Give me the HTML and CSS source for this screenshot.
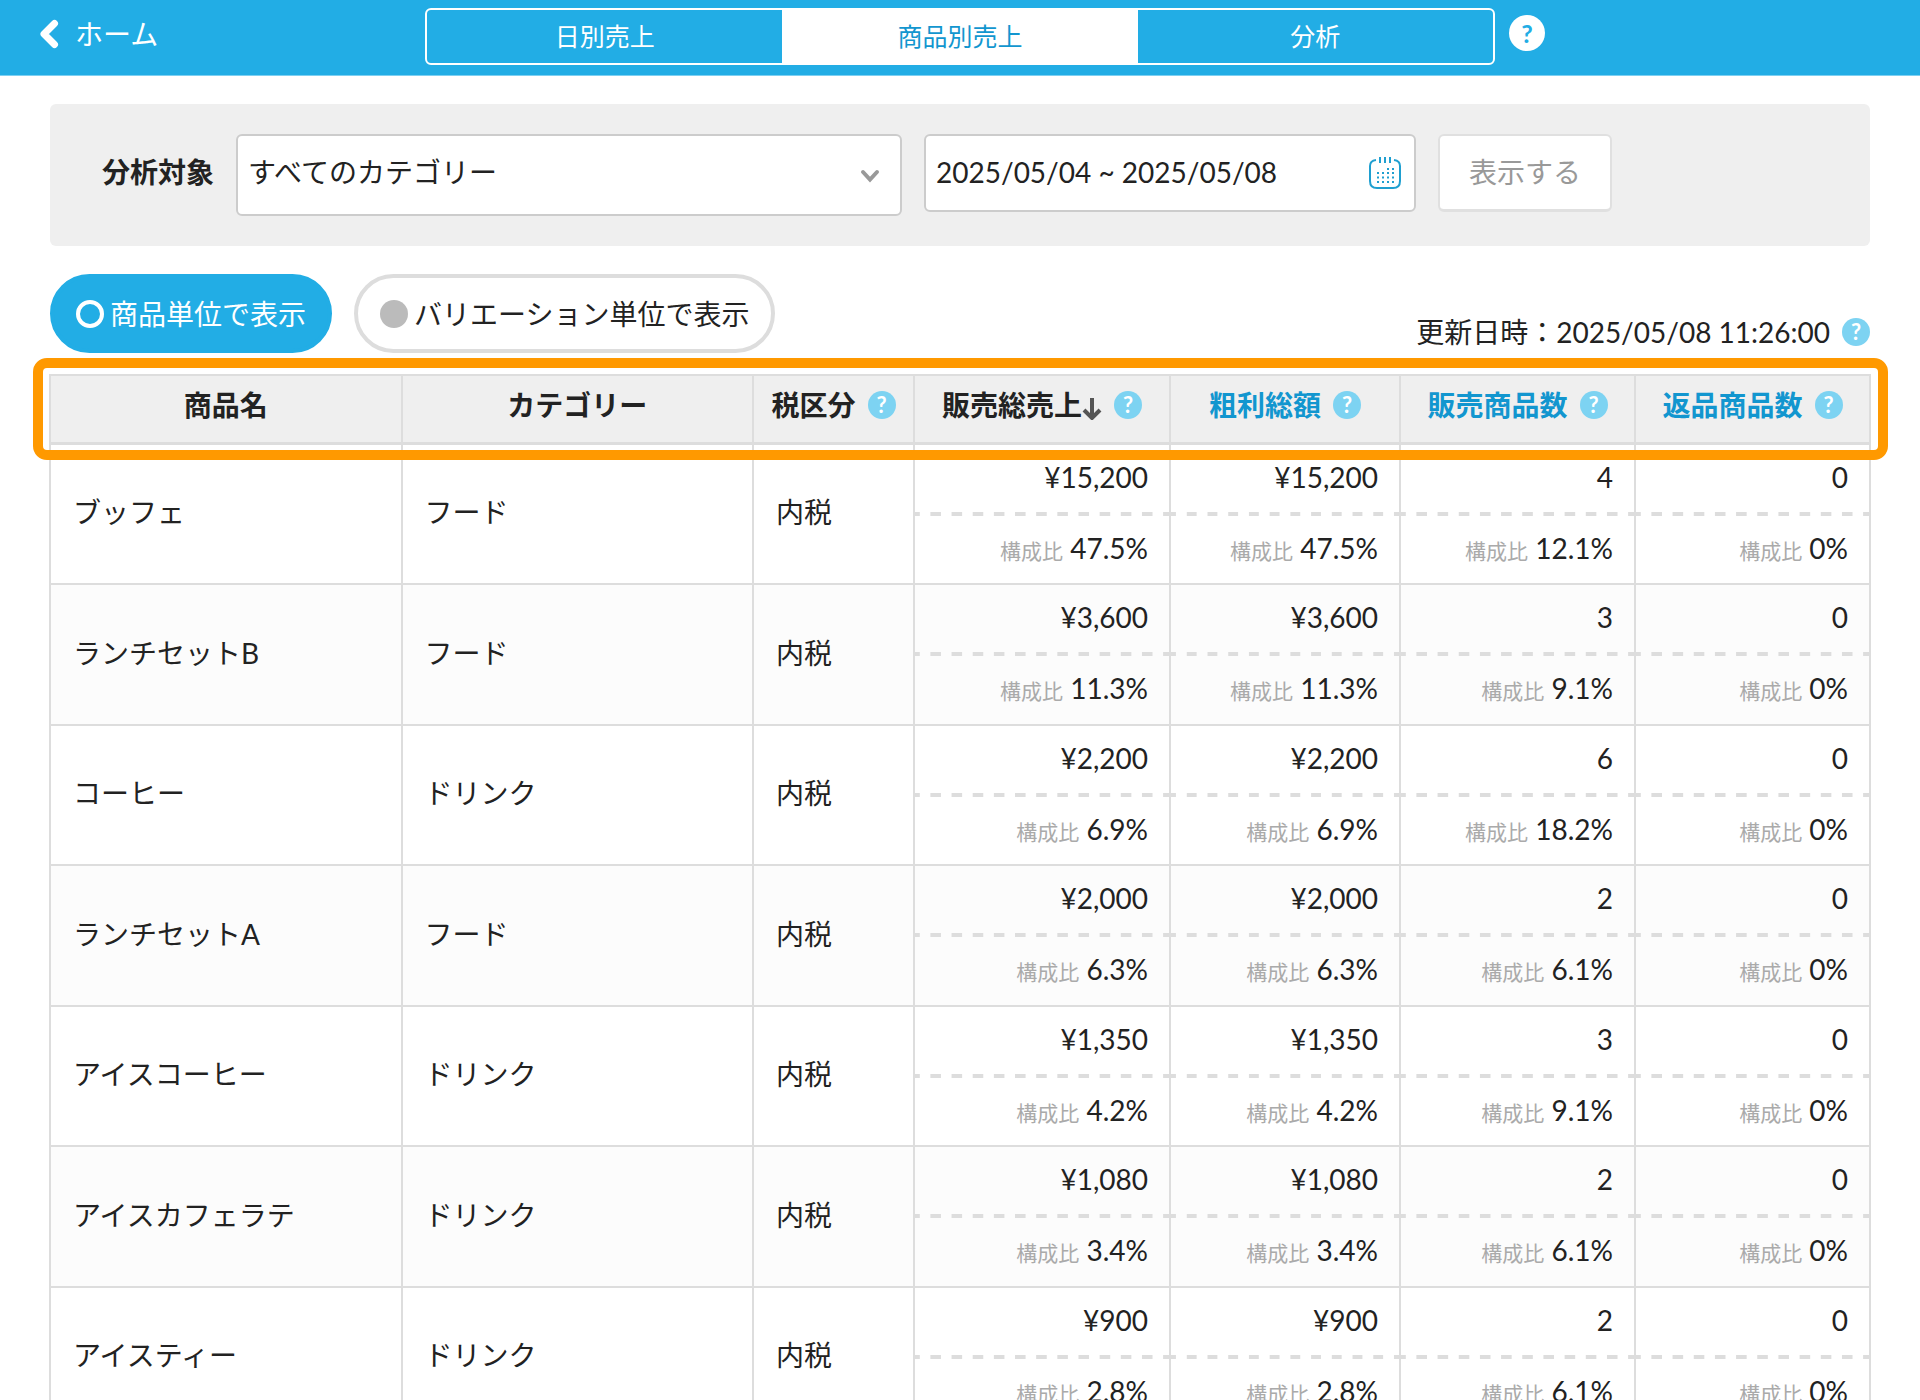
FILE: index.html
```
<!DOCTYPE html>
<html lang="ja">
<head>
    <meta charset="UTF-8">
    <meta name="viewport" content="width=device-width, initial-scale=1.0">
    <title>商品別売上</title>
    <link rel="stylesheet" href="styles.css">
</head>
<body>
    <header class="header">
        <a class="home-link" href="#">
            <svg class="home-icon" viewBox="0 0 20 30"><path d="M15.500 4.500 L5 15 L15.500 25.500" fill="none" stroke="#fff" stroke-width="7" stroke-linecap="round" stroke-linejoin="round"/></svg>
            ホーム
        </a>
        <nav class="tabs">
            <a href="#">日別売上</a>
            <a href="#" class="active">商品別売上</a>
            <a href="#">分析</a>
        </nav>
        <button class="help help-large" type="button" aria-label="ヘルプ">?</button>
    </header>

    <main class="content">
        <form class="filter">
            <label class="filter-label" for="category">分析対象</label>
            <div class="select-box">
                <select id="category">
                    <option>すべてのカテゴリー</option>
                    <option>フード</option>
                    <option>ドリンク</option>
                </select>
                <svg class="select-arrow" viewBox="0 0 20 14"><path d="M3 3 L10 10.500 L17 3" fill="none" stroke="#999" stroke-width="4" stroke-linecap="round"/></svg>
            </div>
            <div class="date-box">
                <input type="text" id="period" aria-label="期間" value="2025/05/04 ~ 2025/05/08">
                <svg class="calendar-icon" viewBox="0 0 32 32" fill="none" stroke="#1f9fd0" stroke-width="2">
                    <path d="M7 3 C3 3.500 1 5.500 1 9 V24 C1 29 3 31 8 31 H24 C29 31 31 29 31 24 V9 C31 5.500 29 3.500 25 3"/>
                    <path d="M11 0 V6 M16 0 V6 M21 0 V6"/>
                    <path d="M18 12 H25" stroke-dasharray="2 3"/>
                    <path d="M8 16 H25 M8 20.500 H25 M8 25 H25" stroke-dasharray="2 3"/>
                </svg>
            </div>
            <button class="show-button" type="button">表示する</button>
        </form>

        <div class="toolbar">
            <div class="unit-switch">
                <label class="unit"><input type="radio" name="unit" checked>商品単位で表示</label>
                <label class="unit"><input type="radio" name="unit">バリエーション単位で表示</label>
            </div>
            <div class="updated">
                <span>更新日時：2025/05/08 11:26:00</span>
                <button class="help" type="button" aria-label="ヘルプ">?</button>
            </div>
        </div>

        <div class="table-wrap">
            <table class="sales-table">
                <colgroup>
                    <col>
                    <col>
                    <col class="col-tax">
                    <col class="col-sales">
                    <col class="col-profit">
                    <col class="col-count">
                    <col class="col-count">
                </colgroup>
                <thead>
                    <tr>
                        <th><div class="head">商品名</div></th>
                        <th><div class="head">カテゴリー</div></th>
                        <th><div class="head">税区分<button class="help" type="button" aria-label="ヘルプ">?</button></div></th>
                        <th>
                            <div class="head">
                                <button class="sort current" type="button">販売総売上<svg class="sort-arrow" viewBox="0 0 20 22"><path d="M10 0 V20 M2 12 L10 20 L18 12" fill="none" stroke="#555" stroke-width="4"/></svg></button>
                                <button class="help" type="button" aria-label="ヘルプ">?</button>
                            </div>
                        </th>
                        <th><div class="head"><button class="sort" type="button">粗利総額</button><button class="help" type="button" aria-label="ヘルプ">?</button></div></th>
                        <th><div class="head"><button class="sort" type="button">販売商品数</button><button class="help" type="button" aria-label="ヘルプ">?</button></div></th>
                        <th><div class="head"><button class="sort" type="button">返品商品数</button><button class="help" type="button" aria-label="ヘルプ">?</button></div></th>
                    </tr>
                </thead>
                <tbody id="sales-body">
                    <!-- Rows are inserted here -->
                </tbody>
            </table>
            <div class="highlight"></div>
        </div>
    </main>

    <script>
        const items = [
            { name: "ブッフェ", category: "フード", sales: "¥15,200", rate: "47.5%", count: 4, countRate: "12.1%" },
            { name: "ランチセットB", category: "フード", sales: "¥3,600", rate: "11.3%", count: 3, countRate: "9.1%" },
            { name: "コーヒー", category: "ドリンク", sales: "¥2,200", rate: "6.9%", count: 6, countRate: "18.2%" },
            { name: "ランチセットA", category: "フード", sales: "¥2,000", rate: "6.3%", count: 2, countRate: "6.1%" },
            { name: "アイスコーヒー", category: "ドリンク", sales: "¥1,350", rate: "4.2%", count: 3, countRate: "9.1%" },
            { name: "アイスカフェラテ", category: "ドリンク", sales: "¥1,080", rate: "3.4%", count: 2, countRate: "6.1%" },
            { name: "アイスティー", category: "ドリンク", sales: "¥900", rate: "2.8%", count: 2, countRate: "6.1%" }
        ];

        function valueCell(value, rate) {
            return `
                <td class="value">
                    <div class="amount">${value}</div>
                    <div class="ratio"><span class="ratio-label">構成比</span> ${rate}</div>
                </td>
            `;
        }

        document.getElementById('sales-body').innerHTML = items.map(item => `
            <tr>
                <td class="text">${item.name}</td>
                <td class="text">${item.category}</td>
                <td class="text">内税</td>
                ${valueCell(item.sales, item.rate)}
                ${valueCell(item.sales, item.rate)}
                ${valueCell(item.count, item.countRate)}
                ${valueCell(0, "0%")}
            </tr>
        `).join('');
    </script>
</body>
</html>
```

FILE: styles.css
```
* {
    box-sizing: border-box;
}

body {
    margin: 0;
    height: 100vh;
    display: flex;
    flex-direction: column;
    font-family: Lato, "Noto Sans CJK JP", sans-serif;
    font-size: 28px;
    line-height: 40px;
    color: #222;
    background-color: #fff;
}

button,
input,
select {
    font: inherit;
    color: inherit;
    margin: 0;
}

button {
    padding: 0;
    border: none;
    background: none;
    cursor: pointer;
}

svg {
    display: block;
    flex: none;
}

/* Header */
.header {
    flex: none;
    display: grid;
    grid-template-columns: 1fr minmax(0, 1070px) 1fr;
    column-gap: 14px;
    align-items: start;
    padding: 8px 0 10px;
    background-color: #22ade5;
    border-bottom: 1px solid #7dd0f2;
}

.home-link {
    display: flex;
    align-items: center;
    gap: 16px;
    height: 52px;
    padding-left: 39px;
    color: #fff;
    text-decoration: none;
}

.home-icon {
    width: 20px;
    height: 30px;
}

.tabs {
    display: flex;
    height: 57px;
    border: 2px solid #fff;
    border-radius: 6px;
}

.tabs a {
    flex: 1;
    display: flex;
    align-items: center;
    justify-content: center;
    padding-bottom: 2px;
    font-size: 25px;
    color: #fff;
    text-decoration: none;
}

.tabs a.active {
    color: #1296cf;
    background-color: #fff;
}

.help {
    flex: none;
    width: 28px;
    height: 28px;
    border-radius: 50%;
    font-size: 22px;
    line-height: 28px;
    font-weight: bold;
    text-align: center;
    color: #fff;
    background-color: #7dd3f2;
}

.help-large {
    width: 36px;
    height: 36px;
    margin-top: 7px;
    font-size: 25px;
    line-height: 36px;
    color: #22ade5;
    background-color: #fff;
}

.content {
    flex: 1;
    min-height: 0;
    overflow-y: auto;
    scrollbar-width: none;
    padding: 28px 50px 0;
}

/* Filter */
.filter {
    display: flex;
    align-items: flex-start;
    gap: 22px;
    padding: 30px 52px;
    border-radius: 6px;
    background-color: #efefef;
}

.filter-label {
    font-weight: bold;
    line-height: 76px;
}

.select-box {
    position: relative;
    width: 666px;
}

.select-box select {
    width: 100%;
    height: 82px;
    padding: 0 60px 6px 10px;
    border: 2px solid #ccc;
    border-radius: 6px;
    background-color: #fff;
    appearance: none;
}

.select-arrow {
    position: absolute;
    right: 22px;
    top: 35px;
    width: 20px;
    height: 14px;
    pointer-events: none;
}

.date-box {
    position: relative;
    width: 492px;
}

.date-box input {
    width: 100%;
    height: 78px;
    padding: 0 60px 2px 10px;
    border: 2px solid #ccc;
    border-radius: 6px;
    background-color: #fff;
}

.calendar-icon {
    position: absolute;
    right: 15px;
    top: 23px;
    width: 32px;
    height: 32px;
    pointer-events: none;
}

.show-button {
    width: 174px;
    height: 78px;
    padding-bottom: 2px;
    border: 2px solid #e0e0e0;
    border-bottom-width: 3px;
    border-radius: 6px;
    color: #999;
    background-color: #fff;
}

/* Unit switch and update time */
.toolbar {
    display: flex;
    justify-content: space-between;
    align-items: flex-end;
    padding: 28px 0 21px;
}

.unit-switch {
    display: flex;
    gap: 22px;
}

.unit {
    display: flex;
    align-items: center;
    gap: 6px;
    height: 79px;
    padding: 0 22px;
    border: 4px solid #ddd;
    border-radius: 40px;
    cursor: pointer;
}

.unit input {
    appearance: none;
    width: 28px;
    height: 28px;
    border-radius: 50%;
    background-color: #bbb;
}

.unit:has(input:checked) {
    border-color: #22ade5;
    color: #fff;
    background-color: #22ade5;
}

.unit input:checked {
    border: 4px solid #fff;
    background: none;
}

.updated {
    display: flex;
    align-items: center;
    gap: 12px;
    padding-bottom: 1px;
}

/* Sales table */
.table-wrap {
    position: relative;
    margin: 0 -1px;
}

.highlight {
    position: absolute;
    top: -16px;
    left: -16px;
    right: -17px;
    height: 102px;
    border: 10px solid #ff9900;
    border-radius: 14px;
    pointer-events: none;
}

.sales-table {
    width: 100%;
    table-layout: fixed;
    border-collapse: separate;
    border-spacing: 0;
    border-left: 2px solid #ddd;
}

.col-tax {
    width: 161px;
}

.col-sales {
    width: 256px;
}

.col-profit {
    width: 230px;
}

.col-count {
    width: 235px;
}

th,
td {
    padding: 0;
    border-right: 2px solid #ddd;
    border-bottom: 2px solid #ddd;
}

th {
    height: 71px;
    border-top: 2px solid #ddd;
    border-bottom-width: 3px;
    background-color: #efefef;
}

.head {
    display: flex;
    align-items: center;
    justify-content: center;
    gap: 12px;
    padding-bottom: 8px;
    white-space: nowrap;
}

.sort {
    display: flex;
    align-items: center;
    font-weight: bold;
    color: #1296cf;
}

.sort.current {
    color: #222;
}

.sort-arrow {
    width: 20px;
    height: 22px;
    margin-top: 8px;
}

tbody tr:nth-child(even) {
    background-color: #fcfcfc;
}

.text {
    padding: 0 20px 4px 22px;
}

.value {
    text-align: right;
}

.amount {
    height: 71px;
    padding-right: 21px;
    line-height: 64px;
    /* one tile is half a dash, a gap and half a dash */
    background: linear-gradient(to right, #ddd 25%, transparent 25%, transparent 75%, #ddd 75%) left bottom / 21px 4px;
    background-repeat: round no-repeat;
}

.ratio {
    height: 67px;
    padding-right: 21px;
    line-height: 64px;
}

tbody tr:nth-child(even) .ratio {
    height: 68px;
}

.ratio-label {
    font-size: 21px;
    color: #aaa;
}
```
